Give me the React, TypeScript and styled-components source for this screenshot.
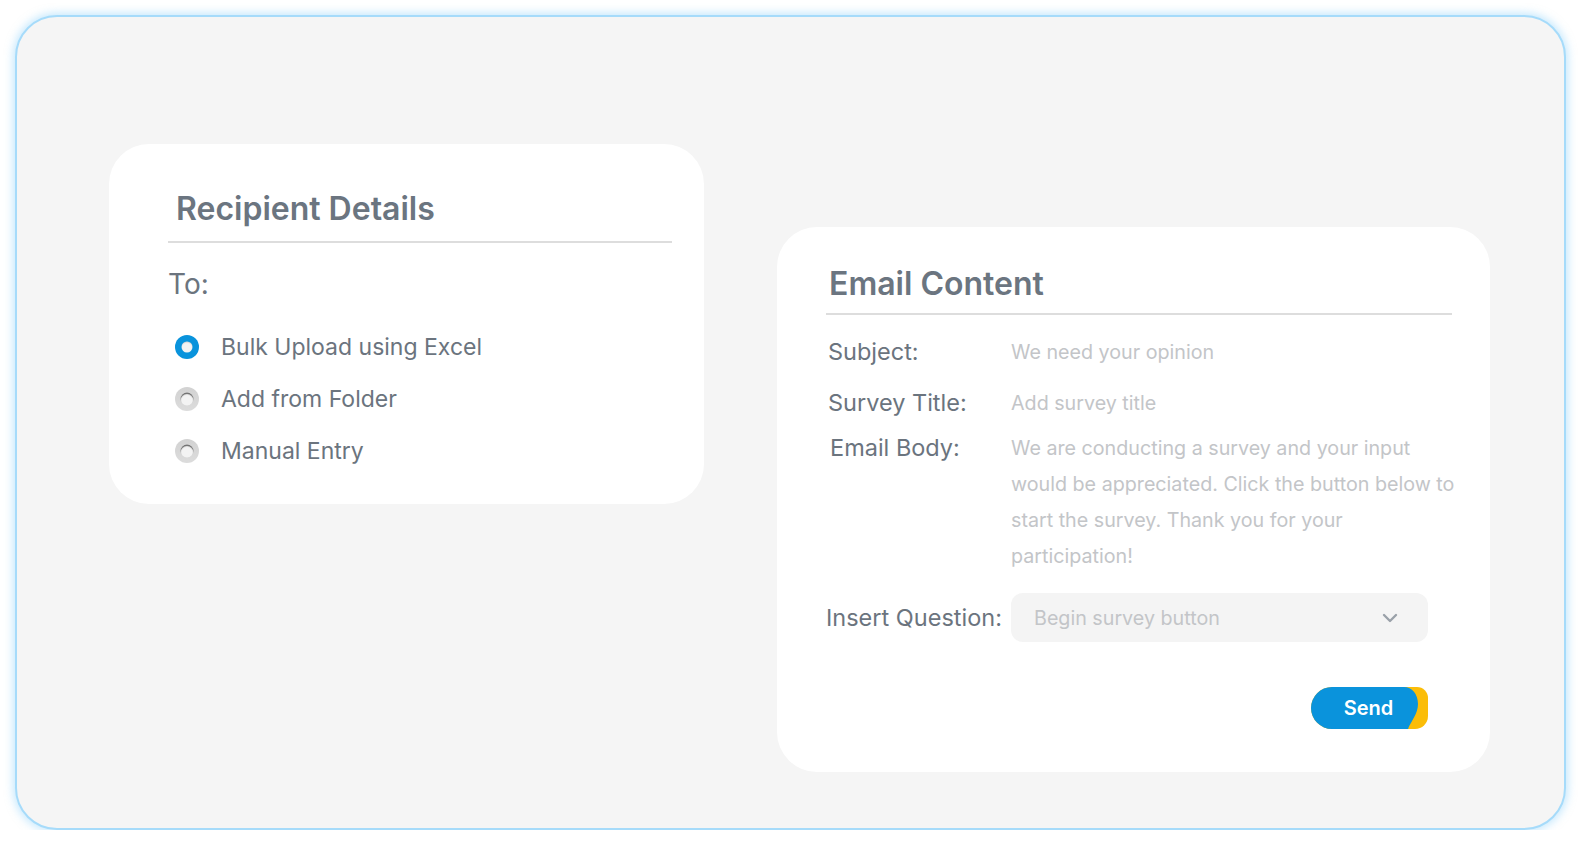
import React from "react";
import styled, { createGlobalStyle } from "styled-components";

const GlobalStyle = createGlobalStyle`
  * {
    box-sizing: border-box;
  }
  body {
    margin: 0;
    background: #ffffff;
    font-family: "Inter", "Noto Sans", sans-serif;
  }
`;

const recipients = [
  { label: "Bulk Upload using Excel", checked: true },
  { label: "Add from Folder", checked: false },
  { label: "Manual Entry", checked: false },
];

const App: React.FC = () => {
  return (
    <>
      <GlobalStyle />
      <Frame>
        <RecipientCard>
          <CardTitle indent={8}>Recipient Details</CardTitle>
          <Divider />
          <ToLabel>To:</ToLabel>
          <RadioList>
            {recipients.map((r) => (
              <RadioRow key={r.label}>
                <Radio checked={r.checked} />
                <RadioText>{r.label}</RadioText>
              </RadioRow>
            ))}
          </RadioList>
        </RecipientCard>

        <EmailCard>
          <CardTitle indent={3}>Email Content</CardTitle>
          <Divider tight />
          <FormGrid>
            <FieldLabel indent={2}>Subject:</FieldLabel>
            <FieldValue>We need your opinion</FieldValue>

            <FieldLabel indent={2}>Survey Title:</FieldLabel>
            <FieldValue>Add survey title</FieldValue>

            <FieldLabel indent={4} drop={6}>
              Email Body:
            </FieldLabel>
            <FieldValue>
              We are conducting a survey and your input
              <br />
              would be appreciated. Click the button below to
              <br />
              start the survey. Thank you for your
              <br />
              participation!
            </FieldValue>

            <FieldLabel>Insert Question:</FieldLabel>
            <Select>
              <span>Begin survey button</span>
              <svg width="16" height="10" viewBox="0 0 16 10" fill="none">
                <path
                  d="M2 2l6 6 6-6"
                  stroke="#9aa1a9"
                  strokeWidth="2.4"
                  strokeLinecap="round"
                  strokeLinejoin="round"
                />
              </svg>
            </Select>
          </FormGrid>
          <Actions>
            <SendButton>
              <svg width="117" height="42" viewBox="0 0 117 42">
                <path
                  d="M21 0H106A11 11 0 0 1 117 11V29A13 13 0 0 1 104 42H21A21 21 0 0 1 21 0Z"
                  fill="#fbbd08"
                />
                <path
                  d="M21 0H93C101 0 107 7 107 17C107 27 100 34 97 42H21A21 21 0 0 1 21 0Z"
                  fill="#0a93dc"
                />
              </svg>
              <span>Send</span>
            </SendButton>
          </Actions>
        </EmailCard>
      </Frame>
    </>
  );
};

const Frame = styled.div`
  display: flex;
  align-items: flex-start;
  width: 1551px;
  height: 815px;
  margin: 15px 0 0 15px;
  padding-left: 92px;
  background: #f5f5f5;
  border: 2px solid #a6dbfa;
  border-radius: 42px;
  box-shadow: 0 0 9px 2px rgba(140, 210, 252, 0.5);
`;

const Card = styled.div`
  background: #ffffff;
  border-radius: 40px;
  display: flex;
  flex-direction: column;
`;

const RecipientCard = styled(Card)`
  width: 595px;
  height: 360px;
  margin-top: 127px;
  padding: 45px 32px 0 59px;
`;

const EmailCard = styled(Card)`
  width: 713px;
  height: 545px;
  margin-top: 210px;
  margin-left: 73px;
  padding: 37px 38px 0 49px;
`;

const CardTitle = styled.h2<{ indent: number }>`
  margin: 0;
  padding-left: ${(p) => p.indent}px;
  font-size: 32px;
  line-height: 40px;
  font-weight: 600;
  color: #6b7580;
`;

const Divider = styled.div<{ tight?: boolean }>`
  height: 2px;
  background: #dddddd;
  margin-top: ${(p) => (p.tight ? 9 : 12)}px;
`;

const ToLabel = styled.div`
  margin-top: 23px;
  font-size: 28px;
  line-height: 36px;
  color: #6b747e;
`;

const RadioList = styled.div`
  display: flex;
  flex-direction: column;
  margin-top: 19px;
`;

const RadioRow = styled.label`
  display: flex;
  align-items: center;
  gap: 22px;
  height: 52px;
  padding-left: 7px;
`;

const Radio = styled.span<{ checked: boolean }>`
  position: relative;
  width: 24px;
  height: 24px;
  border-radius: 50%;
  flex-shrink: 0;
  background: ${(p) =>
    p.checked ? "#0993dc" : "linear-gradient(180deg, #d2d2d2, #dcdcdc)"};

  &::after {
    content: "";
    position: absolute;
    left: 50%;
    top: 50%;
    width: ${(p) => (p.checked ? 11 : 13)}px;
    height: ${(p) => (p.checked ? 11 : 13)}px;
    transform: translate(-50%, -50%);
    border-radius: 50%;
    background: #f3f3f3;
    box-shadow: ${(p) =>
      p.checked
        ? "inset 0 1px 1px rgba(0, 0, 0, 0.12)"
        : "inset 0 1.5px 1px rgba(60, 60, 60, 0.75)"};
  }
`;

const RadioText = styled.span`
  font-size: 23px;
  color: #6b747e;
`;

const FormGrid = styled.div`
  display: grid;
  grid-template-columns: 185px 417px;
  align-items: start;
  row-gap: 15px;
  margin-top: 19px;

  & > :nth-child(5),
  & > :nth-child(6) {
    margin-top: -6px;
  }
  & > :nth-child(7),
  & > :nth-child(8) {
    margin-top: 4px;
    align-self: center;
  }
`;

const FieldLabel = styled.div<{ indent?: number; drop?: number }>`
  font-size: 23.5px;
  line-height: 36px;
  color: #6b747e;
  white-space: nowrap;
  padding-left: ${(p) => p.indent ?? 0}px;
  margin-top: ${(p) => p.drop ?? 0}px;
`;

const FieldValue = styled.div`
  font-size: 19.7px;
  line-height: 36px;
  color: #c3c5c8;
  white-space: nowrap;
`;

const Select = styled.div`
  display: flex;
  align-items: center;
  justify-content: space-between;
  height: 49px;
  padding: 0 30px 0 23px;
  border-radius: 12px;
  background: #f4f4f4;
  font-size: 19.7px;
  color: #c3c5c8;
`;

const Actions = styled.div`
  display: flex;
  justify-content: flex-end;
  padding-right: 24px;
  margin-top: 45px;
`;

const SendButton = styled.button`
  position: relative;
  width: 117px;
  height: 42px;
  padding: 0;
  border: none;
  background: transparent;
  cursor: pointer;
  font-family: "Inter", "Noto Sans", sans-serif;

  svg {
    position: absolute;
    inset: 0;
  }

  span {
    position: relative;
    display: block;
    padding-right: 2px;
    font-size: 20px;
    font-weight: 600;
    color: #ffffff;
  }
`;

export default App;
